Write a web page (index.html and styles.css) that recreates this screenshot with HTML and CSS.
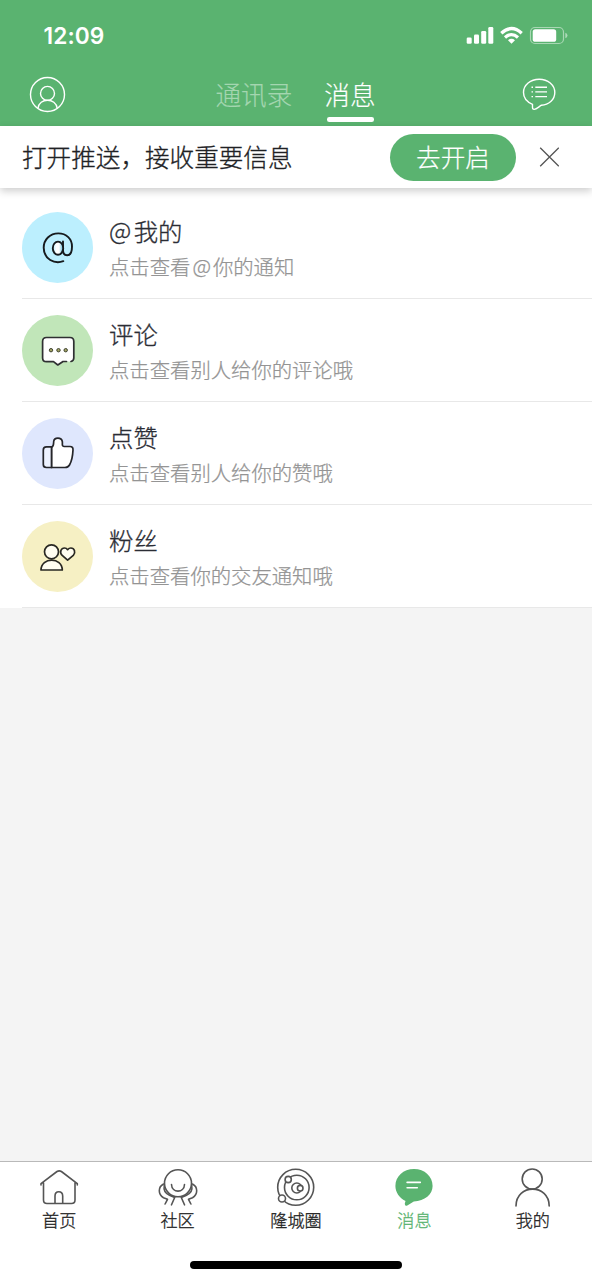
FILE: index.html
```
<!DOCTYPE html>
<html lang="zh-CN">
<head>
<meta charset="utf-8">
<title>消息</title>
<link rel="stylesheet" href="styles.css">
</head>
<body>
<div class="app">
  <header class="header">
    <div class="status">
      <span class="time">12:09</span>
      <svg class="signals" viewBox="466 24 102 22">
        <g fill="#fff"><rect x="466.700" y="37.500" width="5" height="6.300" rx="1.300"/><rect x="474" y="34.500" width="5" height="9.300" rx="1.300"/><rect x="481.200" y="31" width="5" height="12.800" rx="1.300"/><rect x="488.300" y="27" width="5" height="16.800" rx="1.300"/>
        <path d="M511.500 43.700L508 40.200Q511.500 37.500 515 40.200Z"/></g>
        <g fill="none" stroke="#fff" stroke-width="3.300"><path d="M501.300 33.300Q511.500 23.900 521.700 33.300"/><path d="M505 37.500Q511.500 31.800 518 37.500"/></g>
        <rect x="530.500" y="27.500" width="33" height="16" rx="4.500" fill="none" stroke="#fff" stroke-opacity=".48" stroke-width="1.200"/>
        <rect x="532.700" y="29.200" width="23.500" height="12.600" rx="2.600" fill="#fff"/>
        <path d="M565.300 32.800Q567.500 33.500 567.500 35.500T565.300 38.200Z" fill="#fff" fill-opacity=".5"/>
      </svg>
    </div>
    <nav class="topbar">
      <svg class="profile" viewBox="29 76 37 37" fill="none" stroke="#fff" stroke-width="1.400"><circle cx="47.500" cy="94.500" r="17"/><circle cx="47.500" cy="93.400" r="7"/><path d="M38 108.300C39 97.500 56 97.500 57.200 108.300"/></svg>
      <div class="tabs"><span class="tab">通讯录</span><span class="tab tab-active">消息</span></div>
      <svg class="chatlist" viewBox="522 77 35 35" fill="none" stroke="#fff" stroke-width="1.400" stroke-linejoin="round"><path d="M532.500 104.300C526.500 101.800 523.500 97.500 523.500 92.500C523.500 85 530.500 79.200 539.200 79.200S554.800 85 554.800 92.500S548.500 105 541.500 105.200C538.500 107 536.500 109.400 534.300 109.400C532 109.400 532.500 107.800 532.500 104.300Z"/><path d="M535.300 87.200H547M535.300 91.900H547M535.300 96.600H547M531.500 87.200H533M531.500 91.900H533M531.500 96.600H533"/></svg>
    </nav>
  </header>
  <section class="notice">
    <p class="notice-text">打开推送，接收重要信息</p>
    <button class="enable">去开启</button>
    <svg class="close" viewBox="0 0 20 20"><path d="M1.200.700L19.800 19.300M19.800.7L1.200 19.300" stroke="#555" stroke-width="1.300"/></svg>
  </section>
  <main class="list">
    <article class="row">
      <svg class="avatar" viewBox="22 212 71 71"><defs><linearGradient id="at-shine"><stop offset="0" stop-color="#bceffe"/><stop offset=".35" stop-color="#fff"/><stop offset=".6" stop-color="#fff"/><stop offset="1" stop-color="#55b9d8"/></linearGradient></defs><circle cx="57.500" cy="247.500" r="35.500" fill="#bceffe"/><g fill="none" stroke="#171b1e" stroke-width="1.900" stroke-linecap="round"><path d="M63.300 261.200C54.500 264.500 43.700 259 43.700 247.800C43.700 239.500 50 233.400 58.300 233.400C66.500 233.400 72 239 72 246.500C72 252.500 70.300 255.300 67.200 255.300C64.300 255.300 63 253.500 63 250V241.500"/><ellipse cx="58" cy="248.200" rx="5.200" ry="6.600" fill="url(#at-shine)"/></g></svg>
      <div class="copy"><h2><span class="title-at">@</span>我的</h2><p>点击查看<span class="at">@</span>你的通知</p></div>
    </article>
    <article class="row">
      <svg class="avatar" viewBox="22 315 71 71"><circle cx="57.500" cy="350.500" r="35.500" fill="#c1e6b9"/><path d="M66.500 361.500H63L57.800 365L53.500 361.700H46.500Q42.600 361.700 42.600 358V341.500Q42.600 337.500 46.500 337.500H70Q73.800 337.500 73.800 341.500V358Q73.800 360.800 71 361.500" fill="#fff" stroke="#2f3032" stroke-width="1.700" stroke-linejoin="round" stroke-linecap="round"/><g fill="#a3a565" stroke="#3e412f"><circle cx="51" cy="350.200" r="1.700"/><circle cx="58.500" cy="350.200" r="1.700"/><circle cx="65.700" cy="350.200" r="1.700"/></g></svg>
      <div class="copy"><h2>评论</h2><p>点击查看别人给你的评论哦</p></div>
    </article>
    <article class="row">
      <svg class="avatar" viewBox="22 418 71 71"><circle cx="57.500" cy="453.500" r="35.500" fill="#dfe7fd"/><g fill="#fff" stroke="#25262a" stroke-width="1.700" stroke-linejoin="round"><path d="M51.500 447.300C54 446.500 53.500 443.500 53.700 441.500C54.200 437 61.500 437 62.300 441.500C62.700 443.500 61.500 446.500 64 446.500H70Q73.200 446.500 73 450C72.700 456.500 71.500 461.500 69.500 465Q68 467.500 65 467.500H51.500Z"/><path d="M51.500 446.800H46.500Q43.300 446.800 43.300 450V464.500Q43.300 467.500 46.500 467.500H51.500Z" fill="#edf2ff"/></g></svg>
      <div class="copy"><h2>点赞</h2><p>点击查看别人给你的赞哦</p></div>
    </article>
    <article class="row">
      <svg class="avatar" viewBox="22 521 71 71"><circle cx="57.500" cy="556.500" r="35.500" fill="#f6f0c4"/><g fill="#fffdf0" stroke="#292822" stroke-width="1.700" stroke-linejoin="round"><path d="M41 570C41.200 556.800 62.200 556.800 62.300 570Z"/><circle cx="51.500" cy="551.800" r="7"/><path d="M67.600 560.200L62.200 555.400C59 552.200 61.200 548 64.500 548C66.500 548 67.600 549.700 67.600 549.700S69 548 70.900 548C74.300 548 76.100 552.200 73.300 555.400Z"/></g></svg>
      <div class="copy"><h2>粉丝</h2><p>点击查看你的交友通知哦</p></div>
    </article>
  </main>
  <footer class="footer">
    <nav class="nav">
      <a class="item"><svg viewBox="38 1168 42 42"><path d="M43.500 1183V1200Q43.500 1203.500 47 1203.500H71.500Q75 1203.500 75 1200V1183M41 1185V1183.700L57 1171.500Q59.200 1170.200 61.400 1171.500L77.300 1183.700V1185M55 1203.500V1196Q55 1191.700 58.800 1191.700T62.700 1196V1203.500"/></svg><span>首页</span></a>
      <a class="item"><svg viewBox="156.500 1168 42 42"><circle cx="177.500" cy="1183.300" r="13.500"/><path d="M171 1184.500C171.300 1193.300 183.700 1193.300 184 1184.500M163.800 1185.500C162.800 1190.500 165 1193.500 169 1195.300L174.200 1197.500L171 1204.800M163 1184C157.300 1187 157.500 1194.500 163 1197.700L167 1199.300L164.600 1204M191.200 1185.500C192.200 1190.500 190 1193.500 186 1195.300L180.800 1197.500L184 1204.800M192 1184C197.700 1187 197.500 1194.500 192 1197.700L188 1199.300L190.400 1204"/></svg><span>社区</span></a>
      <a class="item"><svg viewBox="275 1168 42 42"><circle cx="295.700" cy="1187.300" r="18"/><circle cx="296.800" cy="1187.500" r="12.300"/><circle cx="296.800" cy="1188" r="5"/><circle cx="300.200" cy="1188.200" r="2.800" class="paper"/><circle cx="288.200" cy="1179.500" r="3.100" class="paper"/><circle cx="282" cy="1198.500" r="3.500" class="paper"/></svg><span>隆城圈</span></a>
      <a class="item active"><svg viewBox="393.200 1168 42 42"><path class="bubble" d="M405.700 1201C399.500 1198 395.600 1192 395.600 1186C395.600 1176.500 403.500 1169 414.200 1169S432.800 1176.500 432.800 1186C432.800 1194.500 425 1201 414 1201.500L407.500 1205.500Q404.800 1206.500 405 1203.500Z"/><path class="lines" d="M407.300 1182.400H420.500M407.300 1187.700H417.500"/></svg><span>消息</span></a>
      <a class="item"><svg viewBox="512 1168 42 42"><circle cx="532.200" cy="1179" r="10"/><path d="M516 1206C516 1183.500 549.200 1183.500 549.200 1206"/></svg><span>我的</span></a>
    </nav>
    <div class="home-indicator"></div>
  </footer>
</div>
</body>
</html>
```
FILE: styles.css
```
* { box-sizing: border-box; }
body { margin: 0; font-family: "Noto Sans CJK SC", sans-serif; font-weight: 300; }
svg { display: block; flex: none; }
h2, p { margin: 0; font-weight: 300; white-space: nowrap; }
.app { width: 592px; height: 1280px; display: flex; flex-direction: column; background: #f4f4f4; }
.header { height: 126px; background: #5ab370; color: #fff; flex: none; }
.status { height: 70px; padding: 0 24px 0 43.5px; display: flex; align-items: center; justify-content: space-between; }
.time { font: 600 22.7px/30px Inter, sans-serif; letter-spacing: .1px; margin-top: 2px; }
.signals { width: 102px; height: 22px; }
.topbar { height: 56px; padding: 0 35px 0 29px; display: flex; }
.profile { width: 37px; height: 37px; margin-top: 6px; }
.chatlist { width: 35px; height: 35px; margin: 7px 0 0 auto; }
.tabs { display: flex; gap: 32px; margin-left: 149.5px; font-size: 25.6px; line-height: 48px; -webkit-text-stroke: .15px currentColor; }
.tab { height: 52px; color: #a4d6b0; }
.tab-active { color: #fff; display: flex; flex-direction: column; align-items: center; }
.tab-active::after { content: ""; width: 47px; height: 4.500px; border-radius: 2.250px; background: #fff; margin: -1px 0 0 1.500px; }
.notice { height: 62px; flex: none; padding: 0 33px 0 22px; display: flex; align-items: center; background: #fff; box-shadow: 0 3px 8px rgba(0,0,0,.2); z-index: 1; }
.notice-text { font-size: 24.6px; line-height: 36px; color: #202124; flex: 1; padding-bottom: 2px; -webkit-text-stroke: .3px currentColor; }
.enable { width: 126px; height: 47px; padding: 0 0 2px; border: 0; border-radius: 24px; background: #5ab370; color: #fff; font: 300 24.6px/45px "Noto Sans CJK SC", sans-serif; margin-right: 23px; -webkit-text-stroke: .2px currentColor; }
.close { width: 20px; height: 20px; }
.list { background: #fff; padding: 8px 0 0; margin-bottom: auto; }
.row { height: 103px; margin-left: 22px; display: flex; align-items: center; gap: 16px; border-bottom: 1px solid #e8e8e8; }
.avatar { width: 71px; height: 71px; }
.copy { display: flex; flex-direction: column; padding-top: 2px; }
.copy h2 { font-size: 24.4px; line-height: 36px; color: #2b2d35; -webkit-text-stroke: .3px currentColor; }
.copy p { font-size: 20.35px; line-height: 34px; color: #949494; -webkit-text-stroke: .25px currentColor; }
.at, .title-at { display: inline-block; line-height: 1; transform: translateY(-1.5px); }
.at { margin: 0 2px; }
.title-at { margin-right: 2.5px; }
.footer { height: 119px; flex: none; background: #fff; border-top: 1px solid #b9b9b9; display: flex; flex-direction: column; align-items: center; justify-content: space-between; padding: 6px 0 11px; }
.nav { width: 100%; display: grid; grid-template-columns: repeat(5, 1fr); }
.item { display: flex; flex-direction: column; align-items: center; color: #222; font-size: 17.1px; line-height: 20px; -webkit-text-stroke: .3px currentColor; }
.item svg { width: 42px; height: 42px; fill: none; stroke: #555; stroke-width: 1.6; stroke-linecap: round; stroke-linejoin: round; }
.item .paper { fill: #fff; }
.item.active { color: #5ab370; }
.item .bubble { fill: #5ab370; stroke: none; }
.item .lines { stroke: #fff; }
.home-indicator { width: 212px; height: 8px; border-radius: 4px; background: #000; }
```
